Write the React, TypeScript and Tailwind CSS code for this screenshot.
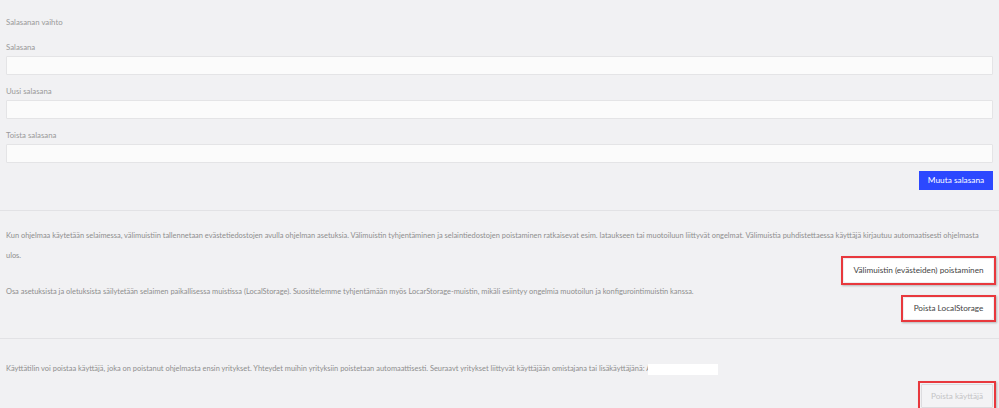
import React from "react";

function Field({ label, first }: { label: string; first?: boolean }) {
  return (
    <div className={first ? "mt-[13px]" : "mt-[10px]"}>
      <div className="text-[7.8px] leading-[12px] text-[#9a9a9a]">{label}</div>
      <div className="mt-[3px] h-[19px] w-full rounded-[1px] border border-[#e4e4e6] bg-[#fbfbfb]" />
    </div>
  );
}

function Marked({ children }: { children: React.ReactNode }) {
  return (
    <div className="relative">
      {children}
      <div className="pointer-events-none absolute -inset-[3px] border-2 border-[#e8383d] shadow-[1px_1px_2px_rgba(0,0,0,0.25)]" />
    </div>
  );
}

export default function App() {
  return (
    <div
      className="h-[408px] w-[999px] overflow-hidden bg-[#f1f1f3] text-[#8e8e8e]"
      style={{ fontFamily: "Lato, 'Noto Sans', sans-serif" }}
    >
      <div className="px-[6px] pt-[16px]">
        <div className="text-[7.8px] leading-[12px] text-[#9a9a9a]">Salasanan vaihto</div>
        <Field label="Salasana" first />
        <Field label="Uusi salasana" />
        <Field label="Toista salasana" />
        <div className="mt-[8px] flex justify-end">
          <button className="flex h-[19px] w-[74px] items-center justify-center bg-[#2c48ff] text-[8.3px] text-white">
            Muuta salasana
          </button>
        </div>
      </div>
      <div className="mt-[20px] h-px bg-[#e2e2e5]" />
      <div className="px-[6px]">
        <p className="mt-[15px] text-[7.45px] leading-[20px] text-[#8e8e8e]">
          Kun ohjelmaa käytetään selaimessa, välimuistiin tallennetaan evästetiedostojen avulla ohjelman asetuksia. Välimuistin tyhjentäminen ja selaintiedostojen poistaminen ratkaisevat esim. lataukseen tai muotoiluun liittyvät ongelmat. Välimuistia puhdistettaessa käyttäjä kirjautuu automaatisesti ohjelmasta ulos.
        </p>
        <div className="-mt-[7px] flex justify-end">
          <Marked>
            <button className="flex h-[23px] w-[149px] items-center justify-center rounded-[1px] bg-white text-[8.2px] text-[#444] shadow-[0_0_1px_rgba(0,0,0,0.15)]">
              Välimuistin (evästeiden) poistaminen
            </button>
          </Marked>
        </div>
        <p className="text-[7.45px] leading-[20px] text-[#8e8e8e]">
          Osa asetuksista ja oletuksista säilytetään selaimen paikallisessa muistissa (LocalStorage). Suosittelemme tyhjentämään myös LocarStorage-muistin, mikäli esiintyy ongelmia muotoilun ja konfigurointimuistin kanssa.
        </p>
        <div className="-mt-[4px] flex justify-end">
          <Marked>
            <button className="flex h-[21px] w-[89px] items-center justify-center rounded-[1px] bg-white text-[8.2px] text-[#444] shadow-[0_0_1px_rgba(0,0,0,0.15)]">
              Poista LocalStorage
            </button>
          </Marked>
        </div>
      </div>
      <div className="mt-[19px] h-px bg-[#e2e2e5]" />
      <div className="px-[6px]">
        <p className="mt-[20px] flex items-center text-[7.45px] leading-[20px] text-[#8e8e8e]">
          <span>
            Käyttätilin voi poistaa käyttäjä, joka on poistanut ohjelmasta ensin yritykset. Yhteydet muihin yrityksiin poistetaan automaattisesti. Seuraavt yritykset liittyvät käyttäjään omistajana tai lisäkäyttäjänä: A
          </span>
          <span className="-ml-[3px] inline-block h-[11px] w-[70px] bg-white" />
        </p>
        <div className="mt-[5px] flex justify-end">
          <Marked>
            <button
              disabled
              className="flex h-[24px] w-[72px] items-center justify-center rounded-[1px] border border-[#dcdcdf] bg-[#f3f3f5] text-[8.2px] text-[#c4c4c6]"
            >
              Poista käyttäjä
            </button>
          </Marked>
        </div>
      </div>
    </div>
  );
}
